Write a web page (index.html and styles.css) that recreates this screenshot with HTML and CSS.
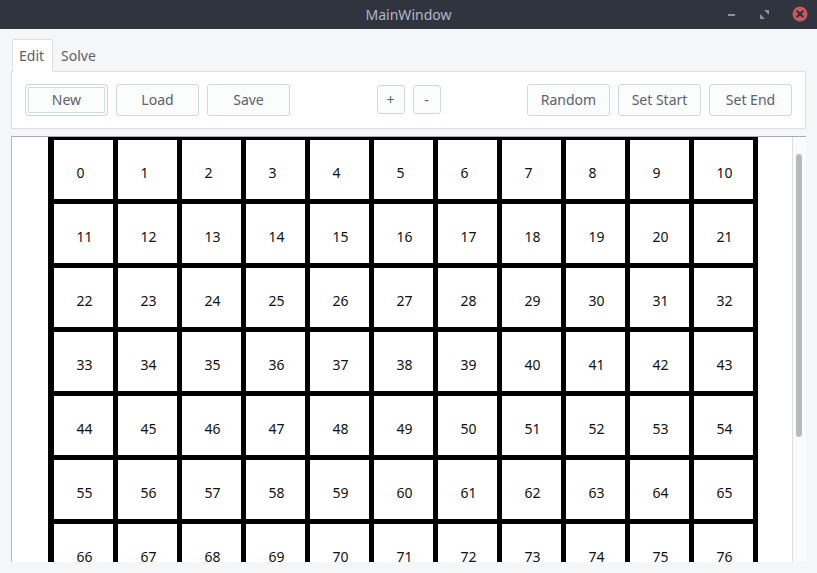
FILE: index.html
```html
<!DOCTYPE html>
<html>
<head>
<meta charset="utf-8">
<link rel="stylesheet" href="styles.css">
</head>
<body>
<div class="window">
  <div class="titlebar">
    <div class="title">MainWindow</div>
    <div class="wm-buttons">
      <svg class="wm-min" width="8" height="8" viewBox="0 0 8 8"><rect x="0" y="3" width="7" height="2" fill="#8b929e"/></svg>
      <svg class="wm-max" width="9" height="9" viewBox="0 0 9 9"><path d="M4 0H9V5Z M0 4V9H5Z" fill="#8b929e"/></svg>
      <svg class="wm-close" width="16" height="16" viewBox="0 0 16 16"><circle cx="8" cy="8" r="7.5" fill="#cc575d"/><path d="M5.2 5.2L10.8 10.8M10.8 5.2L5.2 10.8" stroke="#2f343f" stroke-width="2" stroke-linecap="round"/></svg>
    </div>
  </div>
  <div class="content">
    <div class="tabwidget">
      <div class="tabbar">
        <div class="tab active">Edit</div>
        <div class="tab">Solve</div>
      </div>
      <div class="pane">
        <button class="btn focus">New</button>
        <button class="btn">Load</button>
        <button class="btn">Save</button>
        <div class="spacer"></div>
        <button class="btn small">+</button>
        <button class="btn small">-</button>
        <div class="spacer"></div>
        <button class="btn">Random</button>
        <button class="btn">Set Start</button>
        <button class="btn">Set End</button>
      </div>
    </div>
    <div class="scrollarea">
      <div class="viewport">
        <div class="grid" id="grid"></div>
      </div>
      <div class="vscroll"><div class="thumb"></div></div>
    </div>
  </div>
</div>
<script>
  var g = document.getElementById('grid');
  for (var i = 0; i < 121; i++) {
    var c = document.createElement('div');
    c.className = 'cell';
    c.textContent = i;
    g.appendChild(c);
  }
</script>
</body>
</html>
```
FILE: styles.css
```css
* { box-sizing: border-box; }
html, body { margin: 0; padding: 0; }
body {
  width: 817px;
  height: 573px;
  overflow: hidden;
  background: #f5f6f7;
  font-family: "Noto Sans", "DejaVu Sans", sans-serif;
  font-size: 14px;
  color: #5c616c;
}
.window { display: flex; flex-direction: column; height: 573px; }
.titlebar {
  height: 29px;
  background: #2f343f;
  position: relative;
  display: flex;
  align-items: center;
  justify-content: center;
  flex: none;
}
.title { color: #afb8c6; font-size: 14px; line-height: 29px; }
.wm-buttons {
  position: absolute;
  right: 9px;
  top: 0;
  height: 29px;
  display: flex;
  align-items: center;
}
.wm-min { margin-right: 24px; }
.wm-max { margin-right: 23px; }
.wm-close { margin-top: -1px; }

.content {
  flex: 1;
  display: flex;
  flex-direction: column;
  padding: 10px 11px 11px 11px;
  gap: 7px;
  min-height: 0;
}
.tabbar { display: flex; height: 32px; padding-left: 1px; }
.tab {
  padding: 6px 7px 0 6px;
  height: 32px;
  color: #5c616c;
  border: 1px solid transparent;
  border-bottom: none;
  line-height: 20px;
}
.tab.active {
  background: #ffffff;
  border-color: #dcdfe3;
  border-radius: 2px 2px 0 0;
  position: relative;
  z-index: 1;
  height: 33px;
  width: 41px;
}
.tab + .tab { padding-left: 7px; }
.pane {
  background: #ffffff;
  border: 1px solid #dcdfe3;
  height: 58px;
  display: flex;
  align-items: center;
  padding: 0 13px 1px 13px;
  gap: 8px;
  margin-top: 0;
}
.spacer { flex: 1; }
.btn {
  width: 83px;
  height: 32px;
  background: #fbfcfc;
  border: 1px solid #cfd6e6;
  border-radius: 3px;
  font-family: "Noto Sans", "DejaVu Sans", sans-serif;
  font-size: 14px;
  color: #5c616c;
  padding: 0;
}
.btn.focus { box-shadow: inset 0 0 0 2px #fbfcfc, inset 0 0 0 3px #d3d9e4; }
.btn.small { width: 28px; height: 29px; }

.scrollarea {
  flex: 1;
  min-height: 0;
  display: flex;
  border-top: 1px solid #a8acb2;
  border-left: 1px solid #b4b7bc;
  background: #ffffff;
}
.viewport {
  flex: 1;
  overflow: hidden;
  display: flex;
  justify-content: center;
}
.grid {
  display: grid;
  grid-template-columns: repeat(11, 59px);
  grid-auto-rows: 59px;
  gap: 5px;
  padding: 3px 5px 5px 6px;
  background: #000;
  align-self: flex-start;
  margin-left: 1px;
}
.cell {
  background: #ffffff;
  color: #111;
  font-size: 14px;
  display: flex;
  align-items: center;
  justify-content: flex-start;
  padding: 5px 0 0 23px;
}
.vscroll {
  width: 14px;
  flex: none;
  background: #fbfbfc;
  border-left: 1px solid #dcdfe3;
  padding: 17px 3px 0 3px;
}
.thumb {
  width: 6px;
  height: 283px;
  border-radius: 3px;
  background: #b8babf;
}
```
